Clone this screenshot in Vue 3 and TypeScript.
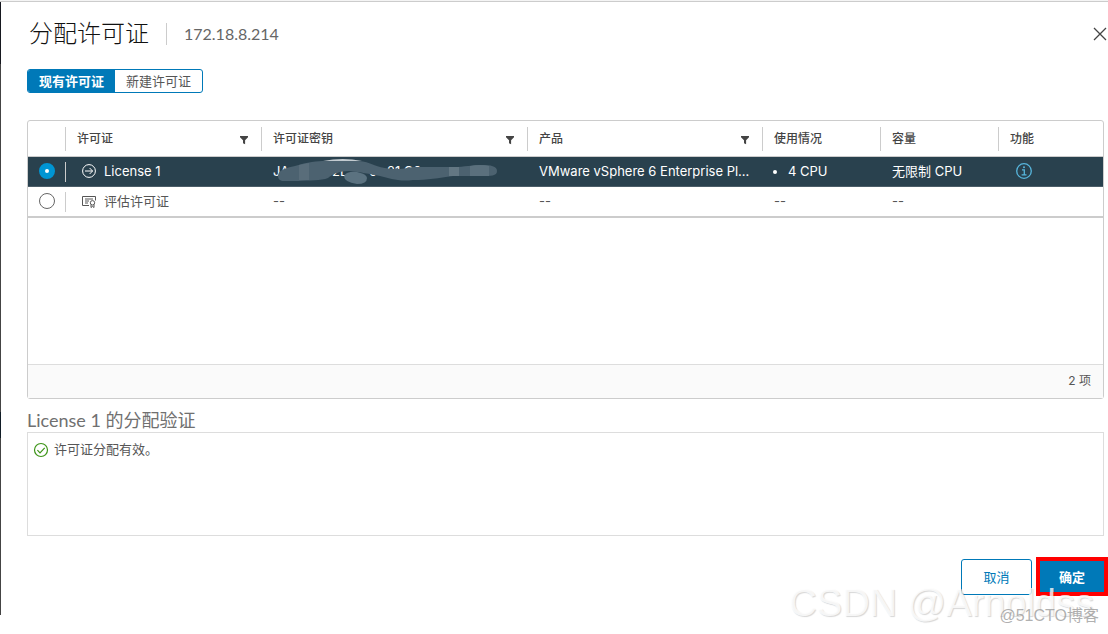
<script setup lang="ts">
import { ref, computed } from 'vue'

interface License {
  id: string
  name: string
  product: string
  usage: string
  capacity: string
}

const tab = ref<'existing' | 'new'>('existing')
const selected = ref('license-1')

const licenses: License[] = [
  {
    id: 'license-1',
    name: 'License 1',
    product: 'VMware vSphere 6 Enterprise Pl...',
    usage: '4 CPU',
    capacity: '无限制 CPU',
  },
  { id: 'evaluation', name: '评估许可证', product: '--', usage: '--', capacity: '--' },
]

const columns = [
  { label: '许可证', filter: true },
  { label: '许可证密钥', filter: true },
  { label: '产品', filter: true },
  { label: '使用情况', filter: false },
  { label: '容量', filter: false },
  { label: '功能', filter: false },
]

const current = computed(() => licenses.find((l) => l.id === selected.value)?.name ?? '')
</script>

<template>
  <div class="page">
    <main class="dialog">
      <header class="head">
        <h1>分配许可证</h1>
        <span class="host">172.18.8.214</span>
        <button class="close" type="button" aria-label="关闭">
          <svg width="16" height="16" viewBox="0 0 16 16">
            <path d="M2 2 L14 14 M14 2 L2 14" fill="none" stroke="#444" stroke-width="1.3" />
          </svg>
        </button>
      </header>

      <div class="tabs">
        <button type="button" :class="{ on: tab === 'existing' }" @click="tab = 'existing'">现有许可证</button>
        <button type="button" :class="{ on: tab === 'new' }" @click="tab = 'new'">新建许可证</button>
      </div>

      <section class="grid">
        <div class="grid-body">
          <table>
            <colgroup>
              <col class="c-pick" />
              <col class="c-name" />
              <col class="c-key" />
              <col class="c-product" />
              <col class="c-usage" />
              <col class="c-cap" />
              <col />
            </colgroup>
            <thead>
              <tr>
                <th aria-label="选择"></th>
                <th v-for="c in columns" :key="c.label" scope="col">
                  <div class="th">
                    <span>{{ c.label }}</span>
                    <button v-if="c.filter" type="button" class="filter" :aria-label="'筛选' + c.label">
                      <svg width="10" height="10" viewBox="0 0 10 10">
                        <path d="M1 1 H9 V2.2 L6.1 5.2 V9.3 L4 8.2 V5.2 L1 2.2 Z" fill="#444" />
                      </svg>
                    </button>
                  </div>
                </th>
              </tr>
            </thead>
            <tbody>
              <tr v-for="l in licenses" :key="l.id" :class="{ picked: selected === l.id }">
                <td class="pick">
                  <input v-model="selected" type="radio" name="license" :value="l.id" :aria-label="l.name" />
                </td>
                <td class="name">
                  <div class="with-icon">
                    <svg v-if="l.id === 'license-1'" width="16" height="16" viewBox="0 0 16 16" fill="none" stroke="currentColor">
                      <circle cx="8" cy="8" r="6.4" />
                      <path d="M4 8 H11.5 M8.6 5 L11.6 8 L8.6 11" />
                    </svg>
                    <svg v-else width="16" height="16" viewBox="0 0 16 16" fill="none" stroke="currentColor">
                      <path d="M8 12.5 H1.5 V3.5 H14.5 V7.5" />
                      <path d="M4 6 H12 M4 8 H8 M4 10 H7" />
                      <circle cx="11.5" cy="9.8" r="2.2" />
                      <path d="M10 11.5 V14.5 L11.5 13.4 L13 14.5 V11.5" />
                    </svg>
                    <span>{{ l.name }}</span>
                  </div>
                </td>
                <td class="key">
                  <svg v-if="l.id === 'license-1'" class="masked" width="228" height="28" viewBox="0 0 228 28" role="img" aria-label="已隐藏的许可证密钥">
                    <g class="key-text">
                      <text x="0" y="18">JA</text>
                      <text x="59" y="18">2L</text>
                      <text x="96" y="18">0</text>
                      <text x="114" y="18">21 C0</text>
                      <text x="200" y="18">2L</text>
                    </g>
                    <path d="M50 3 Q70 -1 89 3 Z" fill="#c3cbd0" />
                    <path d="M5 18 C5 12 13 10 22 8 C34 4 45 3 52 3 H86 C98 4 100 8 112 10 C122 12 130 11 140 9 H180 C193 9 198 7 208 7 C218 7 224 8 224 13 C224 18 218 18 208 18 H180 C165 20 155 22 140 22 C125 24 117 20 107 18 C96 16 88 14 76 13 C66 13 60 16 55 20 C48 23 36 22 25 23 H11 C7 23 5 21 5 18 Z" fill="#4c6270" />
                    <path d="M71 18 Q74 13 84 14 Q94 16 94 20 Q94 26 84 26 Q71 24 71 18 Z" fill="#5b7280" />
                    <path d="M26 7 L36 5 V22 H26 Z" fill="#596d7a" />
                    <path d="M176 9 H186 V18 H176 Z" fill="#637783" />
                    <path d="M197 8 Q208 6 216 8 V18 H197 Z" fill="#5b707d" />
                  </svg>
                  <template v-else>--</template>
                </td>
                <td class="product">{{ l.product }}</td>
                <td>
                  <ul v-if="l.id === 'license-1'"><li>{{ l.usage }}</li></ul>
                  <template v-else>{{ l.usage }}</template>
                </td>
                <td>{{ l.capacity }}</td>
                <td>
                  <button v-if="l.id === 'license-1'" type="button" class="info" aria-label="功能详情">
                    <svg width="18" height="18" viewBox="0 0 18 18" fill="none" stroke="#57b5dc">
                      <circle cx="9" cy="9" r="7.3" stroke-width="1.3" />
                      <path d="M7 7.8 H9.3 V12.8 M6.6 12.8 H11.5" stroke-width="1.3" />
                      <circle cx="9" cy="5.2" r="1" fill="#57b5dc" stroke="none" />
                    </svg>
                  </button>
                </td>
              </tr>
            </tbody>
          </table>
        </div>
        <footer class="grid-foot">2 项</footer>
      </section>

      <h2>{{ current }} 的分配验证</h2>
      <section class="result">
        <svg width="16" height="16" viewBox="0 0 16 16" fill="none" stroke="#3c9417">
          <circle cx="8" cy="8" r="6.5" stroke-width="1.2" />
          <path d="M4.4 8.2 L7 10.8 L11.7 5.8" stroke-width="1.2" />
        </svg>
        <span>许可证分配有效。</span>
      </section>

      <div class="actions">
        <button type="button" class="cancel">取消</button>
        <div class="marked"><button type="button" class="ok">确定</button></div>
      </div>
    </main>
    <div class="mark-large" aria-hidden="true">CSDN @Arnoldss</div>
    <div class="mark-small" aria-hidden="true">@51CTO博客</div>
  </div>
</template>

<style>
body {
  margin: 0;
  background: #fff;
}
</style>

<style scoped>
.page {
  position: relative;
  min-height: 100vh;
  box-sizing: border-box;
  overflow: hidden;
  border-top: 1px solid #f4f4f4;
  color: #565656;
  font-family: Inter, 'Noto Sans CJK SC', sans-serif;
  font-size: 13px;
  line-height: 20px;
}
.dialog {
  box-sizing: border-box;
  padding: 16px 4px 19px 27px;
  border-top: 1px solid #ccc;
  background: linear-gradient(#16181f 0 62px, #444 62px 410px, #111c26 410px 436px, #444 436px) 0 0 / 1px 100% no-repeat;
}
button {
  box-sizing: border-box;
  padding: 0;
  border: 0;
  background: none;
  color: inherit;
  font: inherit;
  cursor: pointer;
}
svg {
  display: block;
  flex: none;
}
.head {
  display: flex;
  align-items: center;
  height: 32px;
  padding-left: 2px;
}
h1 {
  margin: 0;
  padding-right: 17px;
  color: #111;
  font-size: 24px;
  font-weight: 300;
  line-height: 32px;
}
.host {
  padding-left: 17px;
  border-left: 1px solid #ccc;
  color: #666;
  font-family: Lato, sans-serif;
  font-size: 16px;
  line-height: 22px;
}
.close {
  margin: 0 -4px 0 auto;
}
.tabs {
  display: flex;
  width: 176px;
  height: 24px;
  margin-top: 19px;
  box-sizing: border-box;
  overflow: hidden;
  border: 1px solid #0079b8;
  border-radius: 3px;
}
.tabs button {
  flex: 1;
  line-height: 22px;
}
.tabs .on {
  background: #0079b8;
  color: #fff;
  font-weight: 700;
}
.grid {
  margin-top: 27px;
  border: 1px solid #ccc;
  border-radius: 3px;
}
.grid-body {
  height: 243px;
}
table {
  width: 100%;
  table-layout: fixed;
  border-collapse: separate;
  border-spacing: 0;
}
.c-pick { width: 37px; }
.c-name { width: 196px; }
.c-key { width: 266px; }
.c-product { width: 235px; }
.c-usage,
.c-cap { width: 118px; }
th,
td {
  box-sizing: border-box;
  padding: 0 12px;
  text-align: left;
  vertical-align: middle;
}
th {
  height: 36px;
  border-bottom: 1px solid #ccc;
  color: #444;
  font-size: 12px;
  font-weight: 500;
}
td {
  height: 30px;
  border-bottom: 1px solid #ccc;
  white-space: nowrap;
}
th + th,
.name {
  background: linear-gradient(#ccc, #ccc) 0 50% / 1px 24px no-repeat;
}
.name {
  background-size: 1px 20px;
}
tr:last-child td {
  height: 31px;
  padding-bottom: 2px;
  border-bottom: 2px solid #ccc;
}
.th {
  display: flex;
  align-items: center;
  justify-content: space-between;
}
.filter {
  padding-top: 3px;
}
.picked td {
  padding-bottom: 2px;
  background-color: #29414e;
  border-bottom-color: #4b5d68;
  color: #fff;
}
td.pick {
  padding-left: 11px;
  padding-right: 0;
}
.pick input {
  display: block;
  box-sizing: border-box;
  width: 16px;
  height: 16px;
  margin: 0;
  appearance: none;
  border: 1px solid #666;
  border-radius: 50%;
  background: #fff;
}
.pick input:checked {
  border: 6px solid #0095d3;
}
td.name {
  padding-left: 16px;
}
.picked td.key {
  padding-bottom: 0;
}
td.product {
  padding-right: 0;
}
.with-icon {
  display: flex;
  align-items: center;
  gap: 7px;
}
.masked {
  overflow: hidden;
}
.key-text {
  fill: #fff;
  font-size: 13px;
}
ul {
  margin: 0;
  padding-left: 14px;
}
.info {
  display: block;
  margin-left: 5px;
}
.grid-foot {
  height: 33px;
  padding-right: 12px;
  border-top: 1px solid #ddd;
  background: #fafafa;
  font-size: 12px;
  line-height: 32px;
  text-align: right;
}
h2 {
  margin: 9px 0 0;
  color: #707070;
  font-family: Lato, 'Noto Sans CJK SC', sans-serif;
  font-size: 18px;
  font-weight: 400;
  line-height: 24px;
}
.result {
  display: flex;
  gap: 5px;
  height: 95px;
  padding: 7px 5px 0;
  border: 1px solid #ddd;
}
.result svg {
  margin-top: 2px;
}
.result span {
  line-height: 18px;
}
.actions {
  display: flex;
  justify-content: flex-end;
  align-items: center;
  gap: 4px;
  margin: 21px -4px 0 0;
}
.cancel {
  width: 71px;
  height: 36px;
  border: 1px solid #0079b8;
  border-radius: 3px;
  color: #0079b8;
}
.marked {
  border: 4px solid #f00;
}
.ok {
  display: block;
  width: 64px;
  height: 31px;
  background: #0079b8;
  color: #fff;
  font-weight: 700;
}
.mark-large,
.mark-small {
  position: absolute;
  font-family: 'Liberation Sans', 'Noto Sans CJK SC', sans-serif;
  pointer-events: none;
}
.mark-large {
  right: 14px;
  bottom: 11px;
  color: rgba(255, 255, 255, 0.8);
  font-size: 38px;
  line-height: 40px;
  text-shadow: 1px 1px 1px rgba(0, 0, 0, 0.16);
}
.mark-small {
  right: 9px;
  bottom: 8px;
  color: rgba(150, 150, 150, 0.75);
  font-size: 16px;
  line-height: 20px;
}
</style>
